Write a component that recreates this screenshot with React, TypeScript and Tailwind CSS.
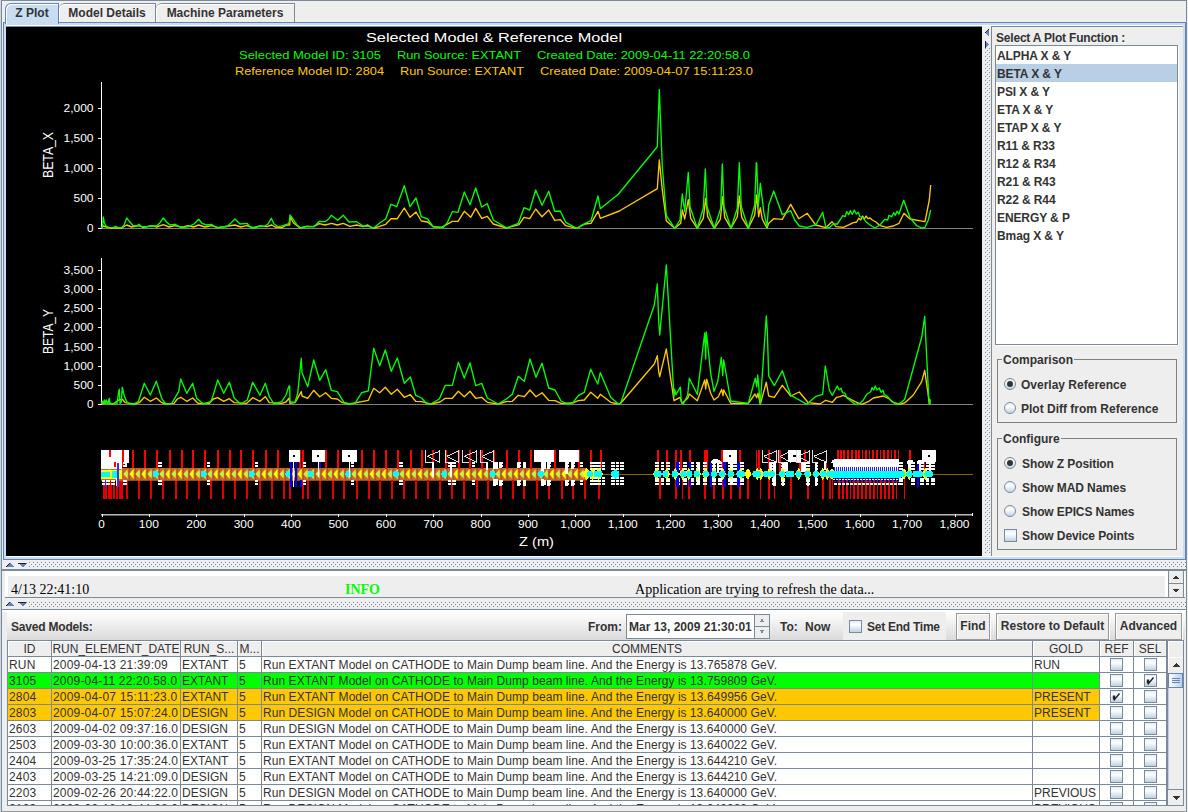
import React from "react";

/* ---------- chart data ---------- */

type Part = [number, number, string];

// Each part holds an origin and points in thirds of a pixel from that origin.
const trace = (parts: Part[]) =>
  parts
    .map(([ox, oy, pts]) =>
      pts
        .split(" ")
        .map((p) => {
          const [x, y] = p.split(",").map(Number);
          return `${(ox + x / 3).toFixed(1)},${(oy + y / 3).toFixed(1)}`;
        })
        .join(" ")
    )
    .join(" ");

const betaXSelected = trace([
  [0, 0, "304,684 308,678 310,651 313,668 318,678 325,682 340,683 347,679 354,683 366,682 372,676 380,654 388,664 398,676 412,678 417,673 423,679 437,681 452,678 470,678 480,668 490,654 499,665 510,675 525,673 537,679 552,682 567,680 582,672 596,658 606,670 620,675 634,673 651,684 668,680 680,680 692,670 705,657 720,672 741,670 750,680 762,684 780,678 793,679 804,672 814,655 822,672 835,680 850,677 864,672 868,666 870,645 880,658 892,676 902,684 921,679 942,680 958,664 975,665 985,658 994,646 1013,661 1030,646 1047,666 1070,665 1089,678 1106,679 1118,684"],
  [360, 20, "40,625 60,608 77,597 93,553 110,560 133,497 150,560 168,534 184,590 203,597 220,621 250,622 262,608 277,575 294,577 313,516 330,554 347,504 365,561 382,551 400,600 420,612 440,624 475,610 492,563 509,570 527,510 546,556 566,514 584,574 601,573 617,607 650,625 675,610 693,602 714,528 721,566 775,523 892,380 898,208 907,440 919,587 944,625 960,600 967,522 974,574 985,457 990,560 1012,625 1030,565 1036,447 1041,560 1063,625 1082,565 1087,432 1092,560 1113,625 1132,565 1138,428 1144,560 1165,625 1184,555 1189,428"],
  [620, 60, "410,310 415,440 421,370 432,460 441,500 446,435 461,393 487,464 512,452 524,480 538,498 560,502 587,495 608,457 617,500 628,503 640,492 652,492 660,480 668,467 675,470 680,455 686,464 691,452 697,463 703,450 709,462 715,457 720,470 728,472 738,485 750,495 765,504 780,495 788,485 795,478 803,480 807,466 815,470 821,458 826,466 831,454 837,462 851,421 870,473 890,497 905,504 915,502 925,480 932,450"],
]);

const betaXReference = trace([
  [0, 0, "304,684 310,678 330,684 365,684 380,675 395,681 415,677 430,682 455,677 470,681 490,674 507,681 525,677 545,682 563,677 580,681 596,675 615,681 635,677 655,683 685,678 705,675 722,681 740,677 757,683 780,678 800,680 815,675 825,681 845,683 860,675 869,675 871,650 880,668 900,684 920,679 940,680 958,671 975,675 995,670 1012,675 1030,670 1050,679 1070,675 1090,680 1103,675 1118,684"],
  [360, 20, "40,625 77,613 93,596 112,596 133,564 150,592 168,576 184,603 203,606 220,620 245,622 277,604 294,604 313,574 332,592 347,565 365,595 382,589 400,612 440,624 477,614 492,592 509,596 527,567 546,590 566,570 584,601 601,599 617,617 650,625 675,612 693,610 714,574 721,595 778,573 892,506 898,420 907,510 919,602 944,625 962,610 967,570 974,597 985,539 992,595 1012,625 1030,595 1037,535 1043,590 1063,625 1081,598 1088,530 1094,592 1113,625 1132,590 1138,528 1145,592 1165,625 1184,585 1190,525"],
  [620, 60, "410,405 416,470 421,443 427,478 441,504 446,490 461,476 487,478 512,433 536,476 562,460 587,495 617,503 636,485 648,500 670,502 688,494 700,488 710,486 716,475 722,480 728,468 733,478 738,468 744,476 750,474 757,480 768,486 780,497 800,502 820,498 837,490 852,460 870,477 915,485 928,420 932,375"],
]);

const betaYSelected = trace([
  [0, 240, "304,492 307,484 310,490 313,480 316,490 319,480 323,491 328,475 330,492 344,492 348,486 351,491 356,455 358,448 360,490 364,486 367,442 372,465 380,485 390,492 402,492 415,485 433,430 451,465 469,424 485,475 497,492 515,490 527,470 536,455 542,417 560,460 578,430 590,475 610,492 632,485 640,465 653,420 671,460 688,427 703,475 722,492 742,480 758,427 780,466 796,430 808,470 822,492 845,485 858,465 867,438 869,438 870,485 885,487 893,460"],
  [280, 240, "64,355 66,398 83,440 101,360 119,421 137,389 154,451 172,455 192,487 208,492 225,490 245,458 265,453 281,325 299,377 316,330 334,394 352,354 373,430 391,411 407,466 425,474 440,491 452,492 478,477 496,436 517,436 535,367 553,414 570,369 587,437 605,430 622,474 655,492 680,476 697,463 715,409 733,424 750,357 768,412 786,370 806,444 825,450 843,483 863,492 878,489 895,467 913,457 932,388 953,432 961,398 992,472 1015,492"],
  [600, 250, "62,460 163,165 172,102 176,212 179,255 199,45 222,440 224,418 228,434 241,411 244,455 250,462 263,435 268,385 292,433 314,249 317,327 319,246 332,370 342,424 353,395 364,322 368,377 371,330 392,453 445,460 466,385 470,410 473,375 481,463 499,198 502,242 506,378 523,407 547,362 572,436 598,450 620,463 648,439 668,433 676,348 688,420 697,436 712,408 717,420 723,415 728,428 735,430 740,443 752,452 765,463 780,460 790,450 800,433 812,425 816,413 821,420 826,408 831,420 838,414 843,427 849,421 853,434 863,440 875,455 890,463 903,458 914,448 965,262 974,199 978,280 986,440 990,463 991,448"],
]);

const betaYReference = trace([
  [0, 240, "304,492 320,488 340,492 356,480 367,478 376,488 402,492 418,488 433,472 451,484 469,474 484,487 497,492 522,490 532,477 542,472 560,484 578,474 594,490 628,490 640,477 653,473 671,484 688,476 703,488 740,490 758,473 780,484 796,470 808,488 845,490 858,486 867,475 870,490 885,488"],
  [280, 240, "64,455 66,468 83,475 101,451 119,470 137,458 154,475 172,477 185,487 208,492 245,485 265,481 281,445 299,458 316,442 334,463 352,448 373,472 391,464 407,484 425,485 452,492 480,486 496,475 517,475 535,454 553,470 570,454 587,475 605,472 622,487 655,492 678,485 697,484 715,466 733,470 750,450 768,470 786,458 806,481 825,482 843,490 878,489 895,482 913,480 932,457 953,475 961,463 992,487 1015,492"],
  [600, 250, "62,460 163,342 172,317 176,365 179,380 199,297 222,452 240,442 246,460 263,445 268,432 292,452 314,390 317,417 320,388 332,430 342,450 355,440 365,418 369,437 371,420 392,460 445,460 465,432 470,443 474,430 481,463 499,397 506,438 523,442 547,406 572,438 598,426 625,458 660,462 677,451 697,457 710,442 720,440 730,436 745,444 765,455 785,463 805,455 820,444 850,438 865,445 880,457 900,463 915,458 940,435 965,395 974,361 984,430 988,463"],
]);

/* ---------- chart drawing ---------- */

const CHART_FONT = '"Liberation Sans", Arial, sans-serif';

function T({ x, y, w, size, fill = "#fff", children }: { x: number; y: number; w: number; size: number; fill?: string; children: string }) {
  return (
    <text x={x} y={y} textLength={w} lengthAdjust="spacingAndGlyphs" fontSize={size} fill={fill} fontFamily={CHART_FONT}>
      {children}
    </text>
  );
}

const vlines = (xs: number[], y1: number, y2: number) => xs.map((x) => `M${x} ${y1}V${y2}`).join("");

function Flag({ x, w = 39 }: { x: number; w?: number }) {
  return (
    <g>
      <path d={`M${x} 60h${w}v37h-${w}z`} fill="#fff" />
      <path d={`M${x + w / 2 - 4} 75h7v7h-7z`} fill="#000" />
    </g>
  );
}

function Camera({ x, w = 42 }: { x: number; w?: number }) {
  return <path d={`M${x} 61V99M${x + w} 61V99M${x + w} 63L${x + 4} 79L${x + w} 97M${x} 99H${x + w * 0.4}`} fill="none" stroke="#ddd" strokeWidth="3" />;
}

function Dots({ xs, upper = [98, 107], lower = [153, 162] }: { xs: number[]; upper?: number[]; lower?: number[] }) {
  const d = xs.map((x) => [...upper, ...lower].map((y) => `M${x - 5} ${y}h11`).join("")).join("");
  return <path d={d} stroke="#fff" strokeWidth="6" />;
}

function Diamonds({ xs, fill, r = 12, h = 16 }: { xs: number[]; fill: string; r?: number; h?: number }) {
  return <path d={xs.map((x) => `M${x - r} 132L${x} ${132 - h}L${x + r} 132L${x} ${132 + h}z`).join("")} fill={fill} />;
}

function Cavities({ xs }: { xs: number[] }) {
  return (
    <g fill="#00ffff">
      {xs.map((x) => (
        <ellipse key={x} cx={x} cy={132} rx={9} ry={10} />
      ))}
    </g>
  );
}

const range = (from: number, to: number, step: number) => {
  const out: number[] = [];
  for (let v = from; v <= to; v += step) out.push(v);
  return out;
};

function Beamline() {
  return (
    <g shapeRendering="crispEdges">
      <path d="M101 474.5H973" stroke="#8a6400" strokeWidth="1" />
      {/* linac */}
      <g transform="translate(90 430) scale(.33333)">
        <path d={vlines([128, 165, 201, 240, 275, 309, 345, 383, 420, 453, 489, 528, 564, 630, 638, 708, 745, 816, 853], 60, 116)} stroke="#f00" strokeWidth="5.5" />
        <path d={vlines([42, 49, 57, 64, 72, 80, 89, 97, 112, 147, 182, 219, 257, 292, 328, 364, 399, 435, 470, 511, 546, 582, 601, 638, 655, 690, 728, 762, 800, 838], 150, 207)} stroke="#e00000" strokeWidth="5.5" />
        <g shapeRendering="auto">
          <path d="M33 114H1490V152H33z" fill="#c8662d" />
          <path d={vlines(range(118, 1480, 18), 114, 152)} stroke="#a4521f" strokeWidth="3" />
          <path d={range(56, 1490, 36).map((x) => `M${x - 10} 132L${x + 3} 116V148z`).join("")} fill="#ffff00" />
          <path d={range(74, 1490, 36).map((x) => `M${x - 10} 132L${x + 3} 118V146z`).join("")} fill="#e6e82a" />
          <path d={range(74, 1490, 36).map((x) => `M${x - 7} 132L${x + 3} 125V139z`).join("")} fill="#a0ff60" />
        </g>
        <Dots xs={[210, 355, 499, 643, 787]} />
        <Cavities xs={[197, 341, 485, 595, 662, 775]} />
        {/* injector */}
        <path d="M33 60H116V100H110V112H104V100H96V116H33z" fill="#fff" />
        <path d="M60 60V80M98 60V110M75 95V112" stroke="#f00" strokeWidth="6" />
        <path d="M33 120H96V148H33z" fill="#ffff00" />
        <path d="M34 125H60V142H34zM66 122H88V144H66z" fill="#00ffff" />
        <path d="M84 100V170M47 150V170" stroke="#3030ff" strokeWidth="6" />
        <path d="M80 145V168" stroke="#fff" strokeWidth="4" />
        <Dots xs={[40, 54, 68, 104]} upper={[]} />
        <Dots xs={[104]} />
        <Flag x={597} w={33} />
        <Flag x={666} />
        <Flag x={757} w={43} />
        <path d="M602 97V170M618 97V170M690 95V114M632 150V170" stroke="#0000ff" strokeWidth="6" />
        <path d="M611 97V170M686 95V140M779 80V140" stroke="#fff" strokeWidth="4" />
      </g>
      <g transform="translate(380 430) scale(.33333)">
        <path d={vlines([18, 54, 92, 127, 160, 198, 236, 270, 305, 342, 381, 417, 452, 525, 597, 633, 662], 60, 116)} stroke="#f00" strokeWidth="5.5" />
        <path d={vlines([0, 36, 73, 108, 144, 180, 215, 252, 290, 325, 362, 399, 432, 471, 508, 545, 580, 616, 656], 150, 207)} stroke="#e00000" strokeWidth="5.5" />
        <Camera x={138} />
        <Camera x={196} w={40} />
        <Camera x={249} />
        <Camera x={302} w={40} />
        <path d="M463 60H522V97H463zM536 60H596V97H536z" fill="#fff" />
        <path d="M343 95V118M350 97V116M363 97V114M417 97V114M433 97V114M487 95V132M495 95V116M507 97V116M559 95V132M578 97V116M343 148V168M350 148V165M363 150V168M417 150V168M433 150V168M487 148V168M495 150V165M507 150V168M559 150V168M578 150V168" stroke="#fff" strokeWidth="9" />
        <path d="M160 97V140M214 97V140M322 97V120" stroke="#fff" strokeWidth="5" />
        <Dots xs={[62, 208, 222, 280, 343, 363, 417, 433, 487, 507, 560, 578, 604]} />
        <Dots xs={[636, 645, 657, 670]} upper={[98, 107, 116]} lower={[145, 153, 162]} />
        <Dots xs={[699, 712, 725]} upper={[98, 107, 116]} lower={[145, 153, 162]} />
        <Diamonds xs={[620, 638, 656]} fill="#ffff00" r={13} h={20} />
        <Cavities xs={[48, 193, 338, 483, 630, 650, 658, 702, 709]} />
        <Diamonds xs={[706]} fill="#00ffff" r={12} h={15} />
      </g>
      {/* transport line and undulator */}
      <g transform="translate(640 430) scale(.33333)">
        <path d={vlines([54, 81, 108, 124, 150, 196, 201, 247, 300, 350, 357, 388, 420, 480, 495, 560, 594, 603, 612, 625, 637, 648, 657, 668, 678, 689, 700, 711, 722, 733, 744, 755, 766, 776, 810, 853], 60, 128)} stroke="#f00" strokeWidth="5" />
        <path d={vlines([60, 108, 128, 147, 196, 223, 249, 274, 300, 325, 362, 387, 404, 453, 504, 549, 571, 578, 598, 609, 621, 632, 643, 655, 666, 678, 690, 702, 713, 724, 736, 748, 759, 770, 794], 138, 207)} stroke="#e80000" strokeWidth="5" />
        <Dots xs={[50, 67, 84, 115, 135, 155, 174, 195, 222, 240, 270, 284, 305]} upper={[99, 108, 117]} lower={[146, 154, 162]} />
        <Dots xs={[402, 428, 504, 529, 782, 818, 845, 862, 878]} upper={[99, 108, 117]} lower={[146, 154, 162]} />
        <path d={vlines([112, 150, 213, 254, 296, 834], 95, 170)} stroke="#0000ff" strokeWidth="8" />
        <path d="M176 97V165M222 95V130M234 95V130M275 97V165M403 97V168M391 97V125M430 97V125M440 97V125M429 140V168M487 97V125M495 97V125M504 150V168M528 97V168M555 97V120M808 97V130M840 97V125M870 97V140" stroke="#fff" strokeWidth="8" />
        <path d="M213 97C213 87 222 88 228 88C238 88 243 92 243 100H213zM800 97C800 87 822 87 822 97V102H800zM830 97C830 88 850 88 850 97V102H830z" fill="#fff" />
        <Flag x={249} w={43} />
        <Camera x={367} />
        <Camera x={417} w={34} />
        <Flag x={444} w={40} />
        <Camera x={470} w={40} />
        <Camera x={517} />
        <Flag x={846} w={43} />
        {/* undulator girders */}
        <path d="M574 97C574 88 582 88 590 88H776V112H580V100H574z" fill="#fff" />
        <path d={vlines(range(584, 776, 6), 112, 150)} stroke="#2020ff" strokeWidth="3" />
        <path d={vlines(range(587, 776, 6), 112, 122)} stroke="#ffffff" strokeWidth="3" />
        <path d="M580 149H776" stroke="#fff" strokeWidth="3" strokeDasharray="6 3" />
        <path d="M582 162H790" stroke="#fff" strokeWidth="6" strokeDasharray="9 3" />
        <path d="M582 154H780" stroke="#2020ff" strokeWidth="4" strokeDasharray="6 3" />
        <Diamonds xs={[50, 80, 106, 128, 146, 172, 196, 222, 248, 273, 302, 324, 352, 362, 388, 428, 476, 504, 548, 562, 576, 792, 808, 856]} fill="#ffff00" r={11} h={18} />
        <path d="M572 122H782V143H572z" fill="#00ffff" />
        <path d="M578 121H780" stroke="#c8ff60" strokeWidth="3" strokeDasharray="4 8" />
        <Cavities xs={[50, 56, 76, 104, 130, 148, 170, 198, 222, 246, 272, 298, 306, 346, 354, 378, 396, 426, 446, 454, 476, 502, 528, 550, 568, 786, 808, 826, 840, 862, 870]} />
      </g>
    </g>
  );
}

function Plot() {
  const green = "#00ff00";
  const amber = "#ffc800";
  const xTick = (v: number) => 101.5 + v * 0.47389;
  return (
    <svg width="976" height="529" viewBox="6 27 976 529" className="block shrink-0 bg-black">
      <T x={366} y={42} w={256} size={13.6}>Selected Model &amp; Reference Model</T>
      <T x={239} y={59} w={142} size={11} fill={green}>Selected Model ID: 3105</T>
      <T x={397} y={59} w={124} size={11} fill={green}>Run Source: EXTANT</T>
      <T x={537} y={59} w={213} size={11} fill={green}>Created Date: 2009-04-11 22:20:58.0</T>
      <T x={235} y={75} w={149} size={11} fill={amber}>Reference Model ID: 2804</T>
      <T x={400} y={75} w={124} size={11} fill={amber}>Run Source: EXTANT</T>
      <T x={540} y={75} w={213} size={11} fill={amber}>Created Date: 2009-04-07 15:11:23.0</T>

      <g transform="translate(52.5 178) rotate(-90)"><T x={0} y={0} w={46} size={14}>BETA_X</T></g>
      <g transform="translate(52.5 354) rotate(-90)"><T x={0} y={0} w={45} size={14}>BETA_Y</T></g>

      {["0", "500", "1,000", "1,500", "2,000"].map((t, i) => {
        const w = [6.5, 20, 30, 30, 30][i];
        return <T key={t} x={93.5 - w} y={232 - i * 30} w={w} size={10.3}>{t}</T>;
      })}
      {["0", "500", "1,000", "1,500", "2,000", "2,500", "3,000", "3,500"].map((t, i) => {
        const w = i === 0 ? 6.5 : i === 1 ? 20 : 30;
        return <T key={t} x={93.5 - w} y={408 - i * 19.14} w={w} size={10.3}>{t}</T>;
      })}

      <g shapeRendering="crispEdges" fill="none">
        <path d="M101 228.5H973M101 404.5H973" stroke="#808080" />
        <path d="M101.5 82V229M101.5 258V405" stroke="#fff" />
        <path d={[0, 1, 2, 3, 4].map((i) => `M98 ${Math.round(228 - i * 30.1) + 0.5}H101`).join("")} stroke="#fff" />
        <path d={range(0, 7, 1).map((i) => `M98 ${Math.round(404 - i * 19.14) + 0.5}H101`).join("")} stroke="#fff" />
      </g>

      <g fill="none" strokeWidth="1.35" strokeLinejoin="round">
        <polyline points={betaXReference} stroke={amber} />
        <polyline points={betaXSelected} stroke={green} />
        <polyline points={betaYReference} stroke={amber} />
        <polyline points={betaYSelected} stroke={green} />
      </g>

      <Beamline />

      <g shapeRendering="crispEdges">
        <path d="M101 514.5H973" stroke="#b8b8b8" />
        <path d="M101 515.5H973" stroke="#606060" />
        <path d={range(0, 18, 1).map((i) => `M${Math.round(xTick(i * 100)) + 0.5} 514V517`).join("") + "M972.5 513V516"} stroke="#fff" />
      </g>
      {range(0, 18, 1).map((i) => {
        const v = i * 100;
        const label = v >= 1000 ? `1,${String(v - 1000).padStart(3, "0")}` : String(v);
        const w = v === 0 ? 6.5 : v < 1000 ? 20 : 30;
        return <T key={v} x={xTick(v) - w / 2} y={528} w={w} size={10.3}>{label}</T>;
      })}
      <T x={519} y={546} w={35} size={12.5}>Z (m)</T>
    </svg>
  );
}

/* ---------- widgets ---------- */

function Bumps({ id, className }: { id: string; className: string }) {
  return (
    <svg className={className} shapeRendering="crispEdges">
      <pattern id={id} width="4" height="4" patternUnits="userSpaceOnUse">
        <rect width="4" height="4" fill="#eee" />
        <path d="M0 0h1v1h-1zM2 2h1v1h-1z" fill="#7a8a99" />
        <path d="M1 1h1v1h-1zM3 3h1v1h-1z" fill="#fff" />
      </pattern>
      <rect width="100%" height="100%" fill={`url(#${id})`} />
    </svg>
  );
}

function SplitArrows() {
  return (
    <svg width="23" height="6" className="ml-1 shrink-0 bg-[#eee]" shapeRendering="crispEdges">
      <path d="M0 5L4 1L9 5z" fill="#6382bf" />
      <path d="M0 5L4 1" stroke="#222" />
      <path d="M12 1H21L16.500 5.500z" fill="#6382bf" />
      <path d="M12 1.500H20" stroke="#222" />
    </svg>
  );
}

function Radio({ on, label, pad = "gap-1.5" }: { on?: boolean; label: string; pad?: string }) {
  return (
    <div className={`flex h-6 items-center ${pad}`}>
      <svg width="12" height="12" className="shrink-0">
        <circle cx="6" cy="6" r="5.500" fill="url(#metal)" stroke="#7a8a99" />
        {on && <circle cx="6" cy="6" r="3" fill="#333" />}
      </svg>
      <span className="pt-px">{label}</span>
    </div>
  );
}

function Check({ on, size }: { on?: boolean; size: number }) {
  return (
    <svg width={size} height={size} className="block shrink-0">
      <rect x="0.5" y="0.5" width={size - 1} height={size - 1} fill="url(#metal)" stroke="#7a8a99" />
      {on && <path d="M3.500 5.500V9.500M4.500 5.500V9.500L9.500 3.500" fill="none" stroke="#222" strokeWidth="1.400" />}
    </svg>
  );
}

function Arrow({ up, w = 8, fill = "#333" }: { up?: boolean; w?: number; fill?: string }) {
  return (
    <svg width={w} height="4" viewBox="0 0 8 4" preserveAspectRatio="none" shapeRendering="crispEdges">
      <path d={up ? "M0 4L4 0L8 4z" : "M0 0H8L4 4z"} fill={fill} />
    </svg>
  );
}

const functions = ["ALPHA X & Y", "BETA X & Y", "PSI X & Y", "ETA X & Y", "ETAP X & Y", "R11 & R33", "R12 & R34", "R21 & R43", "R22 & R44", "ENERGY & P", "Bmag X & Y"];

interface Model {
  id: string;
  date: string;
  source: string;
  energy: string;
  gold?: string;
  tint?: string;
  ref?: boolean;
  sel?: boolean;
}

const models: Model[] = [
  { id: "RUN", date: "2009-04-13 21:39:09", source: "EXTANT", energy: "13.765878", gold: "RUN" },
  { id: "3105", date: "2009-04-11 22:20:58.0", source: "EXTANT", energy: "13.759809", tint: "bg-[#00ff00]", sel: true },
  { id: "2804", date: "2009-04-07 15:11:23.0", source: "EXTANT", energy: "13.649956", gold: "PRESENT", tint: "bg-[#ffc800]", ref: true },
  { id: "2803", date: "2009-04-07 15:07:24.0", source: "DESIGN", energy: "13.640000", gold: "PRESENT", tint: "bg-[#ffc800]" },
  { id: "2603", date: "2009-04-02 09:37:16.0", source: "DESIGN", energy: "13.640000" },
  { id: "2503", date: "2009-03-30 10:00:36.0", source: "EXTANT", energy: "13.640022" },
  { id: "2404", date: "2009-03-25 17:35:24.0", source: "EXTANT", energy: "13.644210" },
  { id: "2403", date: "2009-03-25 14:21:09.0", source: "DESIGN", energy: "13.644210" },
  { id: "2203", date: "2009-02-26 20:44:22.0", source: "DESIGN", energy: "13.640000", gold: "PREVIOUS" },
  { id: "2103", date: "2009-02-18 19:44:08.0", source: "DESIGN", energy: "13.640000", gold: "PREVIOUS" },
];

const cols = "grid grid-cols-[44px_129px_57px_24px_771px_67px_34px_33px]";
const cell = "h-4 overflow-hidden whitespace-nowrap border-b border-r border-[#7a8a99] pl-px leading-[17px]";
const head = "h-4 overflow-hidden whitespace-nowrap border-b border-r border-[#7a8a99] bg-[#eee] text-center leading-[16px] shadow-[inset_1px_1px_0_#fff]";
const button = "flex items-center justify-center border border-[#999] bg-[#eee] shadow-[inset_1px_1px_0_#fff,1px_1px_0_#fff]";

function Tabs() {
  return (
    <div className="flex h-[21px] shrink-0 items-end bg-[#eee] pl-[3px] text-[12px] font-bold leading-none">
      <div className="relative z-10 -mb-0.5 flex h-[21px] w-[54px] items-center justify-center rounded-tl-[6px] border border-b-0 border-[#6382bf] bg-[#c8ddf2] pb-0.5 shadow-[inset_1px_1px_0_#fff]">Z Plot</div>
      <div className="flex h-[19px] w-[97px] items-center justify-center rounded-tl-[6px] border border-b-0 border-l-0 border-[#7a8a99] shadow-[inset_1px_1px_0_#fff]">Model Details</div>
      <div className="flex h-[19px] w-[139px] items-center justify-center rounded-tl-[6px] border border-b-0 border-l-0 border-[#7a8a99] shadow-[inset_1px_1px_0_#fff]">Machine Parameters</div>
    </div>
  );
}

function SidePanel() {
  return (
    <div className="flex w-[192px] flex-col border-l border-t border-[#7a8a99] bg-[#eee] pl-[3px] text-[12px] font-bold text-[#333]">
      <div className="h-[18px] whitespace-nowrap pl-px pt-px leading-[20px] tracking-[-0.2px]">Select A Plot Function :</div>
      <div className="h-[300px] w-[183px] border border-[#7a8a99] bg-white shadow-[1px_1px_0_#fff]">
        {functions.map((f) => (
          <div key={f} className={`h-[18px] pl-px leading-[20px] tracking-[-0.1px] ${f === "BETA X & Y" ? "bg-[#b8cfe5]" : ""}`}>{f}</div>
        ))}
      </div>
      <fieldset className="ml-0.5 mt-1.5 h-[72px] w-[180px] border border-[#808080] pl-[6px]">
        <legend className="-ml-[2px] h-4 px-px leading-[18px]">Comparison</legend>
        <div className="mt-[5px]">
          <Radio on label="Overlay Reference" pad="gap-[5px]" />
          <Radio label="Plot Diff from Reference" pad="gap-[5px]" />
        </div>
      </fieldset>
      <fieldset className="ml-0.5 mt-[7px] h-[120px] w-[180px] border border-[#808080] pl-[6px]">
        <legend className="-ml-[2px] h-4 px-px leading-[18px]">Configure</legend>
        <div className="mt-[5px] tracking-[-0.1px]">
          <Radio on label="Show Z Position" />
          <Radio label="Show MAD Names" />
          <Radio label="Show EPICS Names" />
          <div className="flex h-6 items-center gap-[5px]">
            <Check size={13} />
            <span className="pt-px">Show Device Points</span>
          </div>
        </div>
      </fieldset>
    </div>
  );
}

function LogPanel() {
  return (
    <div className="ml-[3px] flex h-[27px] w-[1180px] shrink-0 border-b border-[#7a8a99] bg-white pl-[3px] pt-[5px]">
      <div className="flex w-[1157px] bg-[#eee] pl-[3px] font-['Liberation_Serif',serif] text-[14px] leading-[28px] text-black">
        <div className="w-[334px]">4/13 22:41:10</div>
        <div className="w-[290px] font-bold text-[#00ff00]">INFO</div>
        <div className="whitespace-nowrap tracking-[0.02px]">Application are trying to refresh the data...</div>
      </div>
      <div className="-mt-[5px] ml-[3px] flex w-4 flex-col border-x border-[#7a8a99] bg-[#eee]">
        <div className="flex h-[13px] items-center justify-center border-b border-[#7a8a99]"><Arrow up w={6} /></div>
        <div className="flex h-[13px] items-center justify-center"><Arrow w={6} /></div>
      </div>
    </div>
  );
}

function Toolbar() {
  return (
    <div className="ml-[5px] flex h-[28px] w-[1178px] shrink-0 items-center bg-gradient-to-b from-white to-[#dadada] text-[12px] font-bold text-[#333]">
      <span className="w-[577px] pl-1 pt-px tracking-[-0.2px]">Saved Models:</span>
      <span className="w-[42px] pl-1 pt-px">From:</span>
      <div className="flex h-[25px] w-[144px] border border-[#7a8a99] bg-white">
        <span className="w-[127px] whitespace-nowrap pl-0.5 leading-[24px]">Mar 13, 2009 21:30:01</span>
        <div className="flex grow flex-col border-l border-[#7a8a99] bg-[#eee]">
          <div className="flex grow items-center justify-center border-b border-[#7a8a99]"><Arrow up w={4} fill="#7a8a99" /></div>
          <div className="flex grow items-center justify-center"><Arrow w={4} fill="#7a8a99" /></div>
        </div>
      </div>
      <span className="w-[35px] pl-[10px] pt-px">To:</span>
      <span className="w-[38px] pt-px">Now</span>
      <div className="flex h-full w-[103px] items-center gap-[5px] bg-[#eee] pl-1.5">
        <Check size={13} />
        <span className="whitespace-nowrap pt-px tracking-[-0.25px]">Set End Time</span>
      </div>
      <div className={`ml-[10px] h-[27px] w-[34px] ${button}`}>Find</div>
      <div className={`ml-1.5 h-[27px] w-[113px] ${button}`}>Restore to Default</div>
      <div className={`ml-1.5 h-[27px] w-[67px] ${button}`}>Advanced</div>
    </div>
  );
}

function ModelTable() {
  return (
    <div className="ml-[5px] flex h-[166px] w-[1177px] shrink-0 overflow-hidden border border-r-0 border-[#7a8a99] bg-white text-[12px] text-[#333]">
      <div className="w-[1159px] shrink-0">
        <div className={cols}>
          {["ID", "RUN_ELEMENT_DATE", "RUN_S...", "M...", "COMMENTS", "GOLD", "REF", "SEL"].map((h) => (
            <div key={h} className={head}>{h}</div>
          ))}
        </div>
        {models.map((m) => (
          <div key={m.id} className={cols}>
            <div className={`${cell} tracking-[0.2px] ${m.tint ?? ""}`}>{m.id}</div>
            <div className={`${cell} tracking-[0.18px] ${m.tint ?? ""}`}>{m.date}</div>
            <div className={`${cell} ${m.tint ?? ""}`}>{m.source}</div>
            <div className={`${cell} ${m.tint ?? ""}`}>5</div>
            <div className={`${cell} tracking-[0.06px] ${m.tint ?? ""}`}>
              Run {m.id === "2403" ? "EXTANT" : m.source} Model on CATHODE to Main Dump beam line. And the Energy is {m.energy} GeV.
            </div>
            <div className={`${cell} ${m.tint ?? ""}`}>{m.gold}</div>
            <div className="flex h-4 items-center justify-center border-b border-r border-[#7a8a99]"><Check size={13} on={m.ref} /></div>
            <div className="flex h-4 items-center justify-center border-b border-r border-[#7a8a99]"><Check size={13} on={m.sel} /></div>
          </div>
        ))}
      </div>
      <div className="flex w-[17px] flex-col border-x border-[#7a8a99] bg-[#eee]">
        <div className="h-4 shadow-[inset_1px_1px_0_#fff]" />
        <div className="flex h-4 items-center justify-center shadow-[inset_1px_1px_0_#fff]"><Arrow up /></div>
        <div className="flex h-[15px] flex-col items-center justify-center gap-px border border-[#6382bf] bg-gradient-to-r from-white to-[#b8cfe5]">
          <div className="h-px w-2 bg-[#6382bf]" />
          <div className="h-px w-2 bg-[#6382bf]" />
          <div className="h-px w-2 bg-[#6382bf]" />
        </div>
        <div className="grow border-l border-[#b8cfe5]" />
        <div className="flex h-4 items-center justify-center border-t border-[#7a8a99]"><Arrow /></div>
      </div>
    </div>
  );
}

export default function App() {
  return (
    <div className="flex h-[812px] w-[1188px] overflow-hidden bg-[#eee] font-['Liberation_Sans',Arial,sans-serif] text-[#333]">
      <svg width="0" height="0" className="absolute">
        <linearGradient id="metal" x1="0" y1="0" x2="0" y2="1">
          <stop offset="0" stopColor="#dfeaf5" />
          <stop offset="0.35" stopColor="#fff" />
          <stop offset="1" stopColor="#b8cfe5" />
        </linearGradient>
      </svg>
      <div className="w-px shrink-0 bg-[#c9d6e4]" />
      <div className="flex w-[1186px] shrink-0 flex-col border-x border-b border-t border-[#7a8a99] border-b-[#999]">
        <Tabs />
        <div className="ml-px flex h-[538px] w-[1183px] shrink-0 border border-[#6382bf] shadow-[inset_1px_1px_0_#fff]">
          <div className="flex w-full flex-col border-x-2 border-b-2 border-t-2 border-[#c8ddf2] bg-white pt-px">
            <div className="flex h-[530px]">
              <div className="h-[530px] shrink-0 border-t border-[#7a8a99] bg-black"><Plot /></div>
              <div className="flex w-[9px] shrink-0 flex-col bg-[#eee] pl-[2px]">
                <svg width="7" height="22" shapeRendering="crispEdges" className="shrink-0">
                  <path d="M5 3L1 7L5 11z" fill="#6382bf" />
                  <path d="M1 15L5 19L1 22z" fill="#6382bf" />
                  <path d="M5 3L1 7M1.500 15V22" stroke="#222" />
                </svg>
                <Bumps id="bv" className="ml-px h-[505px] w-[5px]" />
              </div>
              <SidePanel />
            </div>
          </div>
        </div>
        <div className="flex h-[9px] shrink-0 items-center">
          <SplitArrows />
          <Bumps id="bh1" className="h-[5px] grow" />
        </div>
        <div className="h-0.5 shrink-0 bg-[#7a8a99]" />
        <LogPanel />
        <div className="flex h-[12px] shrink-0 items-center border-b border-[#7a8a99] pt-px">
          <SplitArrows />
          <Bumps id="bh2" className="h-[5px] grow" />
        </div>
        <div className="h-0.5 shrink-0 bg-white" />
        <Toolbar />
        <ModelTable />
      </div>
    </div>
  );
}
